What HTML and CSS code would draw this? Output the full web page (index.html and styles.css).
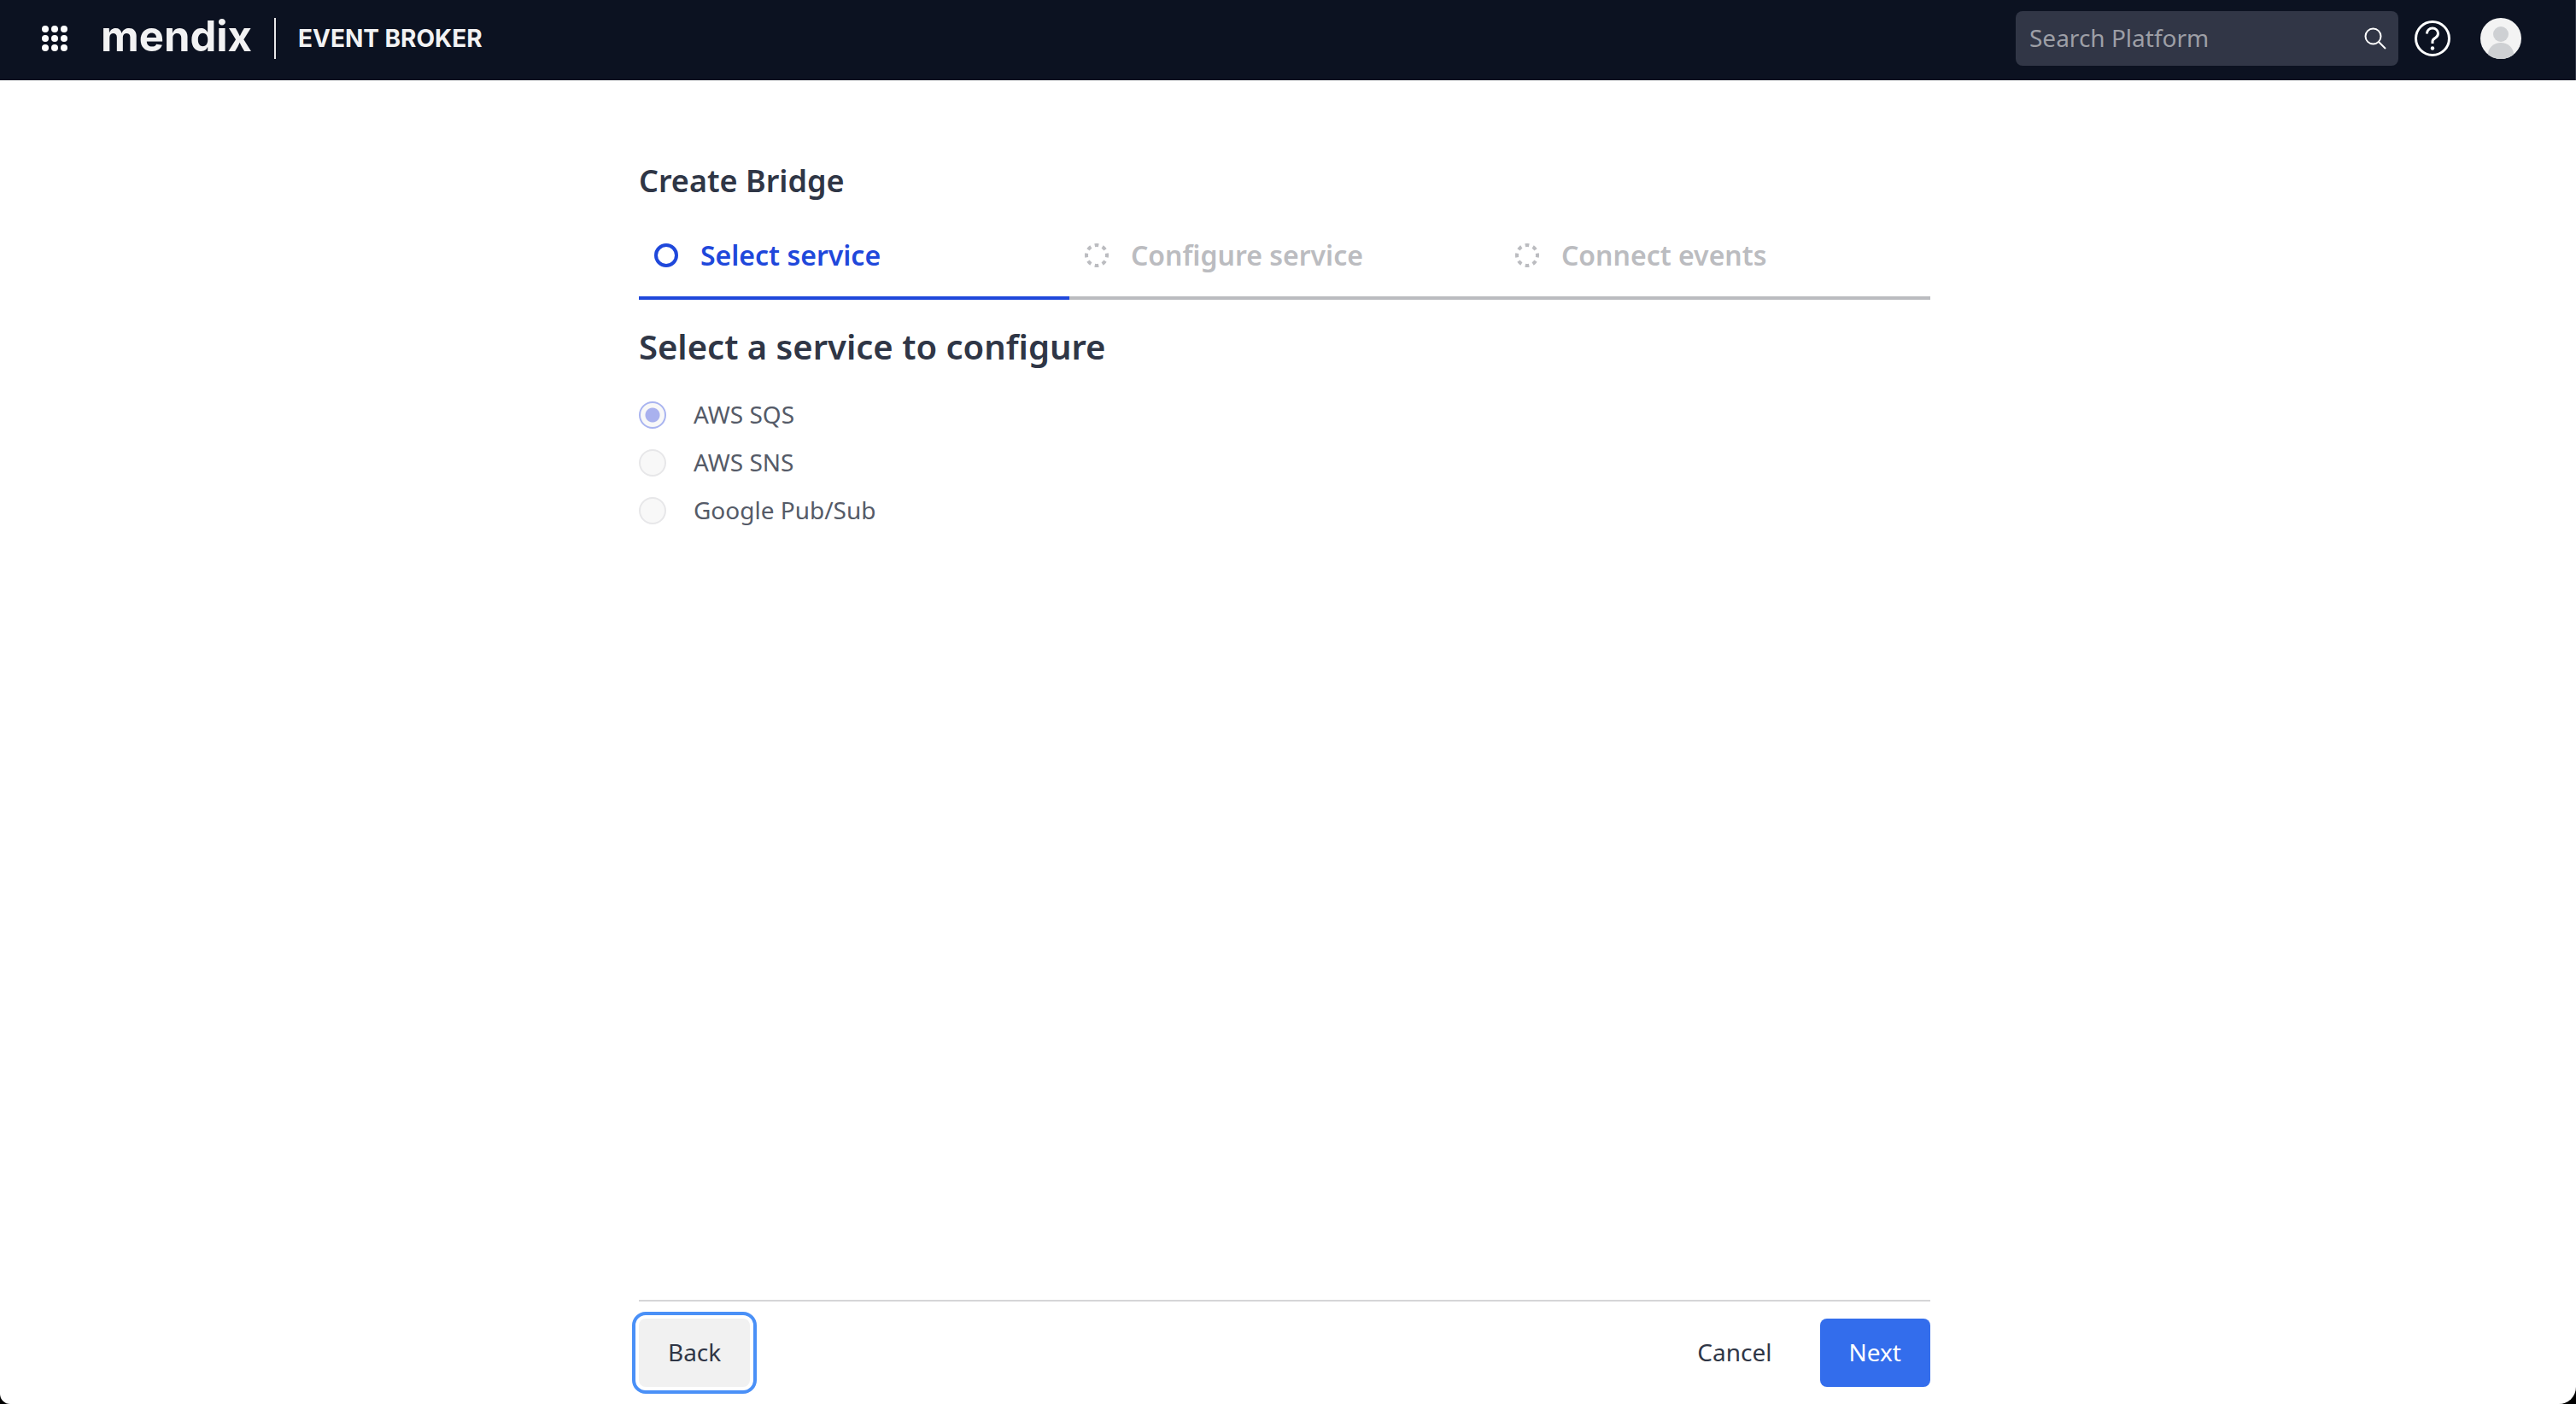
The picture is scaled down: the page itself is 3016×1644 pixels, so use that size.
FILE: index.html
```html
<!DOCTYPE html>
<html lang="en">
<head>
<meta charset="utf-8">
<meta name="viewport" content="width=device-width, initial-scale=1">
<title>Event Broker - Create Bridge</title>
<link rel="stylesheet" href="styles.css">
</head>
<body>
<header class="topbar">
  <button class="icon-button apps" type="button" aria-label="Apps">
    <svg width="30" height="30" viewBox="0 0 30 30" fill="currentColor" aria-hidden="true">
      <circle cx="4" cy="4" r="4"/><circle cx="15" cy="4" r="4"/><circle cx="26" cy="4" r="4"/>
      <circle cx="4" cy="15" r="4"/><circle cx="15" cy="15" r="4"/><circle cx="26" cy="15" r="4"/>
      <circle cx="4" cy="26" r="4"/><circle cx="15" cy="26" r="4"/><circle cx="26" cy="26" r="4"/>
    </svg>
  </button>
  <a class="brand" href="#">mendix</a>
  <span class="divider"></span>
  <a class="product" href="#">EVENT BROKER</a>
  <div class="tools">
    <form class="search" role="search">
      <input class="search-input" type="search" placeholder="Search Platform" aria-label="Search Platform">
      <button class="icon-button" type="button" aria-label="Search">
        <svg width="26" height="26" viewBox="0 0 26 26" fill="none" stroke="currentColor" stroke-width="2" aria-hidden="true">
          <circle cx="10.500" cy="10.500" r="9"/><path d="M17 17l8 8"/>
        </svg>
      </button>
    </form>
    <button class="icon-button" type="button" aria-label="Help">
      <svg width="42" height="42" viewBox="0 0 42 42" fill="none" stroke="currentColor" stroke-width="3" aria-hidden="true">
        <circle cx="21" cy="21" r="19.500"/>
        <path d="M14.500 15.500V15a6.500 6 0 0 1 13 0c0 3-1 4-3 5.200s-3.500 2-3.500 4.300v2.500"/>
        <circle cx="21" cy="32.500" r="2.200" fill="currentColor" stroke="none"/>
      </svg>
    </button>
    <button class="icon-button avatar" type="button" aria-label="Account">
      <svg width="48" height="48" viewBox="0 0 48 48" aria-hidden="true">
        <circle cx="24" cy="24" r="24" fill="#f3f3f3"/>
        <circle cx="24" cy="19" r="9" fill="#ced0d3"/>
        <path d="M9 43a15 14 0 0 1 30 0a24 24 0 0 1-30 0z" fill="#ced0d3"/>
      </svg>
    </button>
  </div>
</header>

<main class="wizard">
  <h1 class="title">Create Bridge</h1>
  <ol class="steps">
    <li class="step step-active" aria-current="step">
      <svg width="28" height="28" viewBox="0 0 28 28" fill="none" stroke="currentColor" stroke-width="4" aria-hidden="true"><circle cx="14" cy="14" r="12"/></svg>
      <span>Select service</span>
    </li>
    <li class="step">
      <svg width="28" height="28" viewBox="0 0 28 28" fill="none" stroke="currentColor" stroke-width="4" aria-hidden="true"><circle cx="14" cy="14" r="12" pathLength="80" stroke-dasharray="5 5" stroke-dashoffset="2.500"/></svg>
      <span>Configure service</span>
    </li>
    <li class="step">
      <svg width="28" height="28" viewBox="0 0 28 28" fill="none" stroke="currentColor" stroke-width="4" aria-hidden="true"><circle cx="14" cy="14" r="12" pathLength="80" stroke-dasharray="5 5" stroke-dashoffset="2.500"/></svg>
      <span>Connect events</span>
    </li>
  </ol>
  <fieldset class="services">
    <legend class="heading">Select a service to configure</legend>
    <label class="option"><input class="radio" type="radio" name="service" checked disabled><span>AWS SQS</span></label>
    <label class="option"><input class="radio" type="radio" name="service" disabled><span>AWS SNS</span></label>
    <label class="option"><input class="radio" type="radio" name="service" disabled><span>Google Pub/Sub</span></label>
  </fieldset>
  <footer class="actions">
    <button class="button button-back" type="button">Back</button>
    <button class="button button-cancel" type="button">Cancel</button>
    <button class="button button-next" type="button">Next</button>
  </footer>
</main>
</body>
</html>
```
FILE: styles.css
```css
* {
  box-sizing: border-box;
}

html {
  background: #000;
}

body {
  display: flex;
  flex-direction: column;
  min-height: 100vh;
  margin: 0;
  border-radius: 0 0 20px 12px;
  background: #fff;
  color: #2f3646;
  font-family: "Noto Sans", "Open Sans", sans-serif;
  font-size: 28px;
  line-height: 40px;
}

button,
input {
  font: inherit;
}

/* Top bar */
.topbar {
  display: flex;
  align-items: center;
  height: 94px;
  padding: 0 63px 4px 49px;
  border-right: 1px solid #313646;
  background: #0c1221;
  color: #fff;
}

.icon-button {
  display: flex;
  padding: 0;
  border: 0;
  background: none;
  color: inherit;
}

.brand,
.product {
  color: #f2f2f3;
  font-family: Inter, sans-serif;
  font-weight: 700;
  text-decoration: none;
}

.brand {
  margin-left: 39px;
  padding-bottom: 4px;
  font-size: 49px;
}

.divider {
  width: 2px;
  height: 48px;
  margin: 0 26px;
  background: #e7e7e9;
}

.tools {
  display: flex;
  align-items: center;
  gap: 19px;
  margin-left: auto;
}

.search {
  display: flex;
  align-items: center;
  width: 448px;
  height: 64px;
  padding: 0 14px 0 16px;
  border-radius: 8px;
  background: #313646;
}

.search-input {
  flex: 1;
  min-width: 0;
  padding: 0 0 2px;
  border: 0;
  background: none;
  color: #fff;
}

.search-input::placeholder {
  color: #9d9fa6;
}

.avatar {
  margin-left: 16px;
}

/* Wizard */
.wizard {
  display: flex;
  flex: 1;
  flex-direction: column;
  width: 50.133%;
  margin-left: 24.800%;
  padding: 94px 0 20px;
}

.title {
  margin: 0;
  font-size: 36px;
  font-weight: 600;
  line-height: 48px;
}

.steps {
  display: grid;
  grid-template-columns: repeat(3, 1fr);
  margin: 16px 0 27px;
  padding: 0;
  list-style: none;
}

.step {
  display: flex;
  align-items: center;
  gap: 26px;
  padding: 23px 18px 24px;
  border-bottom: 4px solid currentColor;
  color: #bbbcc0;
  font-size: 32px;
  font-weight: 600;
  line-height: 48px;
}

.step-active {
  color: #1f48db;
}

.services {
  display: flex;
  flex: 1;
  flex-direction: column;
  gap: 16px;
  margin: 0;
  padding: 0;
  border: 0;
}

.heading {
  margin-bottom: 32px;
  padding: 0;
  font-size: 40px;
  font-weight: 600;
  line-height: 56px;
}

.option {
  display: flex;
  align-items: center;
  align-self: flex-start;
  gap: 32px;
  height: 40px;
  color: #555b68;
}

.option span {
  padding-bottom: 2px;
}

.radio {
  width: 32px;
  height: 32px;
  margin: 0;
  border: 2px solid #e7e7e9;
  border-radius: 50%;
  background: #f8f8f8;
  appearance: none;
}

.radio:checked {
  border-color: #a9b4f0;
  background: radial-gradient(circle, #a9b1ee 8px, #f8f8f8 9px);
}

.actions {
  display: flex;
  gap: 22px;
  padding-top: 20px;
  border-top: 2px solid #d5d5d7;
}

.button {
  height: 80px;
  padding: 0 34px 2px;
  border: 0;
  border-radius: 8px;
  background: none;
  color: #2f3646;
}

.button-back {
  background: #f1f1f1;
  outline: 4px solid #4a90f7;
  outline-offset: 4px;
}

.button-cancel {
  margin-left: auto;
}

.button-next {
  background: #336dec;
  color: #fff;
}
```
